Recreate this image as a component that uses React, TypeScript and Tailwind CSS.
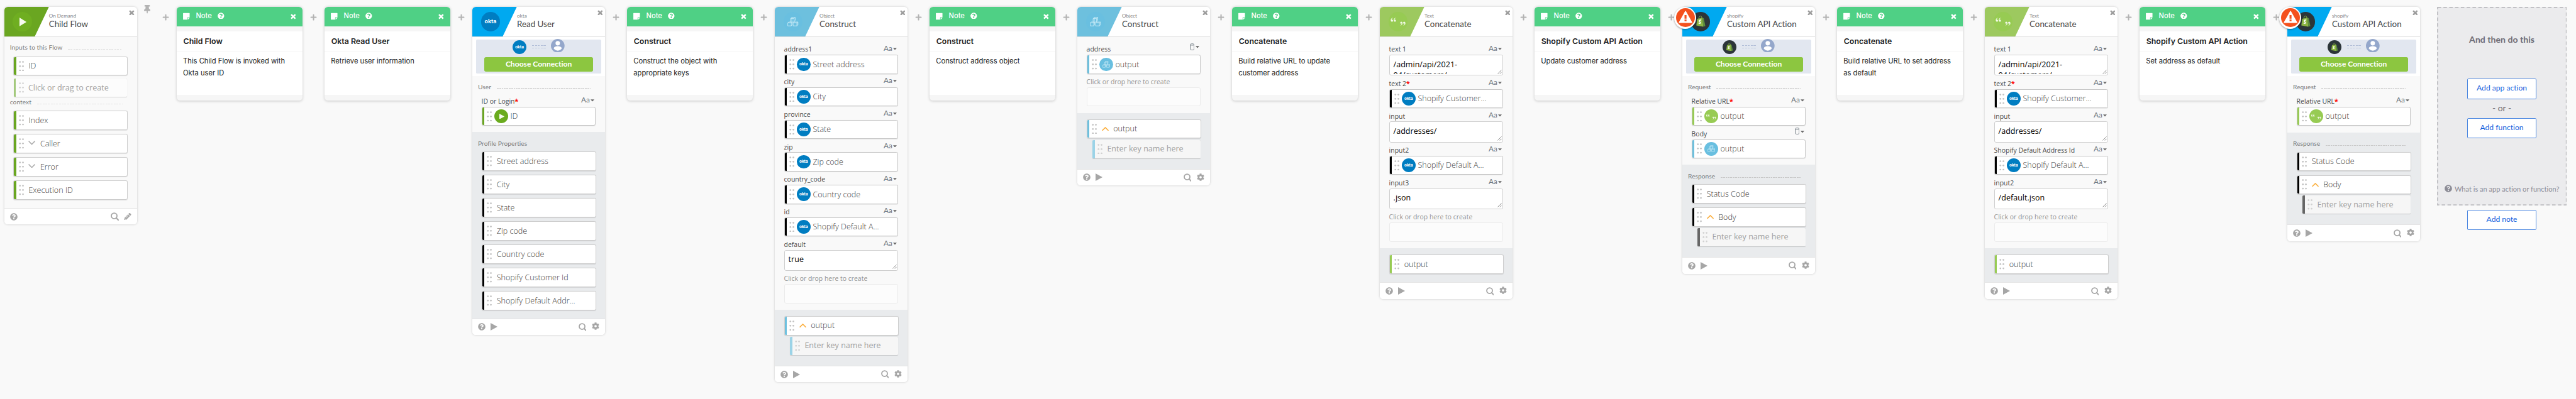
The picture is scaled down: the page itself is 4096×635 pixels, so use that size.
import type { ReactNode } from "react";
import { FaCog, FaPencilAlt, FaPlus, FaQuestionCircle, FaStickyNote, FaThumbtack } from "react-icons/fa";
import { RiDoubleQuotesL, RiDoubleQuotesR } from "react-icons/ri";

type Kind = "play" | "okta" | "object" | "text" | "shopify";

const HEADER_BG: Record<Kind, string> = {
  play: "text-[#6aa621]",
  okta: "text-[#00a9f0]",
  object: "text-[#6dc0de]",
  text: "text-[#9dc95f]",
  shopify: "text-[#00a9f0]",
};

const BAR: Record<Kind, string> = {
  play: "bg-[#6aa621]",
  okta: "bg-black",
  object: "bg-[#6dc0de]",
  text: "bg-[#97cb53]",
  shopify: "bg-black",
};

/* ---------- icons ---------- */

function Cubes({ className }: { className: string }) {
  return (
    <svg viewBox="0 0 20 17" className={className} fill="none" stroke="currentColor" strokeWidth="1" strokeLinejoin="round">
      <path d="M5.8 2.8 8 .7h6.2v5L12.4 8M5.8 2.8h6.4V9H5.8zM12.2 2.8l2-2.1M8 .7v7" />
      <path d="M.7 10.5 2.4 9h6v5.2L7 16M.7 10.5H7V16H.7zM7 10.5 8.6 9" />
      <path d="m10.4 10.5 1.7-1.5h7v5.3L17.2 16M10.4 10.5h6.8V16h-6.8zM17.2 10.5 19.1 9" />
    </svg>
  );
}

function ShopifyBag({ className }: { className: string }) {
  return (
    <svg viewBox="0 0 20 22" className={className}>
      <path d="M6 6C6.4 3 8 1 9.6 1c1.5 0 2.3 1.6 2.5 4.5" fill="none" stroke="#95bf47" strokeWidth="1.1" />
      <path d="M3.2 6.6 13.5 4l1.2 17.5L1.5 19.2z" fill="#8db543" />
      <path d="M13.5 4l2.3 1.5 3 14.9-4.1 1.1z" fill="#5e8e3e" />
      <path
        d="M10.9 9.2c-1.8-.9-4-.1-3.9 1.6.1 1.7 2.5 1.7 2.4 3.3-.1 1.3-1.9 1.5-3.500.4"
        fill="none"
        stroke="#fff"
        strokeWidth="1.9"
      />
    </svg>
  );
}

function SearchIcon({ className }: { className: string }) {
  return (
    <svg viewBox="0 0 14 14" className={className} fill="none" stroke="currentColor">
      <circle cx="6" cy="6" r="4.9" strokeWidth="1.9" />
      <path d="m9.5 9.5 3.6 3.8" strokeWidth="2.1" strokeLinecap="round" />
    </svg>
  );
}

function CloseIcon({ className }: { className: string }) {
  return (
    <svg viewBox="0 0 10 10" className={className} stroke="currentColor" strokeWidth="2.9">
      <path d="M1.200 1.200l7.600 7.600M8.800 1.200 1.200 8.800" />
    </svg>
  );
}

function Badge({ kind, large = false }: { kind: Kind; large?: boolean }) {
  const size = large ? "h-[33px] w-[33px]" : "h-[23.5px] w-[23.5px]";
  const base = `flex shrink-0 items-center justify-center rounded-full ${size}`;
  if (kind === "okta")
    return (
      <div className={`${base} bg-[#007dc1] font-['Inter',sans-serif] font-bold leading-none text-white ${large ? "text-[9.5px]" : "text-[7px]"}`}>
        <span className={large ? "pb-px" : ""}>okta</span>
      </div>
    );
  if (kind === "play")
    return (
      <div className={`${base} ${large ? "bg-[#6fae21]" : "bg-[#6aab1e]"}`}>
        <svg viewBox="0 0 12 14" className={large ? "ml-[3px] h-[15px] w-[12px]" : "ml-[2px] h-[9.5px] w-[9px]"} preserveAspectRatio="none">
          <path d="M0 0v14l12-7z" fill="#f7fbf0" />
        </svg>
      </div>
    );
  if (kind === "object")
    return (
      <div className={`${base} bg-[#69bfe0] text-[#c9ebf7]`}>
        <Cubes className={large ? "h-[16.5px] w-[19px]" : "h-[12px] w-[13.5px]"} />
      </div>
    );
  if (kind === "text")
    return (
      <div className={`${base} bg-[#97cb53] text-[#f2f9e6]`}>
        <RiDoubleQuotesL className={large ? "-mr-px mb-[6px] size-[12px]" : "mb-[4px] size-[8px]"} />
        <RiDoubleQuotesR className={large ? "ml-[5px] mt-[6px] size-[12px]" : "ml-[3px] mt-[5px] size-[8px]"} />
      </div>
    );
  return (
    <div className={`${base} bg-[#2c3539]`}>
      <ShopifyBag className={large ? "mb-px h-[21px] w-[18px]" : "h-[15px] w-[13px]"} />
    </div>
  );
}

/* ---------- rows ---------- */

function Dots() {
  return (
    <svg viewBox="0 0 9 18" className="h-[18px] w-[9px] shrink-0" fill="#c2c2c2">
      {[1.7, 9, 16.3].map((y) => (
        <g key={y}>
          <circle cx="1.9" cy={y} r="1.5" />
          <circle cx="7.1" cy={y} r="1.5" />
        </g>
      ))}
    </svg>
  );
}

function Chevron({ up = false }: { up?: boolean }) {
  return (
    <svg
      viewBox="0 0 12 7"
      className={`mr-[8px] h-[7px] w-[12px] shrink-0 ${up ? "text-[#fbb040]" : "mb-[3px] text-[#adadad]"}`}
      fill="none"
      stroke="currentColor"
      strokeWidth="1.7"
    >
      <path d={up ? "M.6 6.4 6 1l5.4 5.4" : "M.6.6 6 6 11.4.6"} />
    </svg>
  );
}

function Item({ kind, label, chevron }: { kind: Kind; label: string; chevron?: "up" | "down" }) {
  return (
    <div className="ml-[15.5px] flex h-[33px] w-[197px] items-center overflow-hidden rounded-[3px] border border-[#cdcdcd] bg-white shadow-[0_1px_1px_rgba(0,0,0,0.1)]">
      <div className={`h-full w-[4px] shrink-0 ${BAR[kind]}`} />
      <div className="ml-[4px]">
        <Dots />
      </div>
      <div className="w-[8px] shrink-0" />
      {chevron && <Chevron up={chevron === "up"} />}
      <span className="whitespace-nowrap pt-px text-[13.6px] font-light leading-[20px] text-[#3c3c3c]">{label}</span>
    </div>
  );
}

function Ghost({ bar, label, wide = false }: { bar: string; label: string; wide?: boolean }) {
  return (
    <div
      className={`flex h-[31.5px] items-center overflow-hidden rounded-[2px] shadow-[0_1px_1px_rgba(0,0,0,0.16)] ${
        wide ? "ml-[16px] mt-[5.5px] w-[195.5px] bg-[#fcfcfc]" : "ml-[26px] mt-[2.4px] w-[186px] bg-[#f6f6f6]"
      }`}
    >
      <div className={`h-full w-[4px] shrink-0 ${bar}`} />
      <div className="ml-[4.5px] opacity-70">
        <Dots />
      </div>
      <span className="ml-[7.5px] whitespace-nowrap text-[13.6px] leading-[20px] text-[#a0a0a0]">{label}</span>
    </div>
  );
}

function SectionLabel({ children, className, faint = false }: { children: string; className: string; faint?: boolean }) {
  return (
    <div className={`flex items-start pl-[9.5px] pr-[24.5px] ${className}`}>
      <span className="whitespace-nowrap font-['Lato',sans-serif] text-[11.1px] leading-[14px] text-[#7c7c7c]">{children}</span>
      <div
        className={`ml-[9.5px] mt-[9.2px] flex-1 ${
          faint
            ? "h-[1.5px] bg-[repeating-linear-gradient(90deg,#e0e0e0_0_3.2px,transparent_3.2px_4.7px)]"
            : "h-[1px] bg-[repeating-linear-gradient(90deg,#c8c8c8_0_3px,transparent_3px_4.1px)]"
        }`}
      />
    </div>
  );
}

type FieldProps = { label: string; required?: boolean; type?: "text" | "object"; muted?: boolean; children: ReactNode };

function Field({ label, required = false, type = "text", muted = false, children }: FieldProps) {
  return (
    <div className="ml-[15.5px] w-[196px]">
      <div className="flex h-[23px] items-start justify-between pt-[6px] leading-[16px]">
        <span className={`whitespace-nowrap text-[11.3px] ${muted ? "text-[#939393]" : "text-[#484848]"}`}>
          {label}
          {required && <span className="text-[11.3px] font-bold leading-none text-[#f00]">*</span>}
        </span>
        {!muted && (
          <span className="mr-[2px] flex items-center gap-px text-[#6d7780]">
            {type === "text" ? (
              <span className="-mt-[2px] font-['Lato',sans-serif] text-[12.8px] leading-[16px]">Aa</span>
            ) : (
              <svg viewBox="0 0 8 12" className="-mt-[3px] mr-[1px] h-[12px] w-[8px]" fill="none" stroke="currentColor">
                <path d="M.6 2.5v7.2c0 1 1.5 1.7 3.4 1.7s3.400-.7 3.400-1.7V2.5M.6 2.5c0-1 1.5-1.8 3.4-1.8s3.400.8 3.400 1.8c0 .5-1.5.7-3.400.7S.6 3 .6 2.5z" />
              </svg>
            )}
            <svg viewBox="0 0 7 4" className="-mt-px h-[4px] w-[6.5px]">
              <path d="M0 0h7L3.5 4z" fill="#666" />
            </svg>
          </span>
        )}
      </div>
      {children}
    </div>
  );
}

function Pill({ kind, label }: { kind: Kind; label: string }) {
  return (
    <div className="flex h-[33px] items-center overflow-hidden rounded-[3px] border border-[#c6c6c6] bg-white shadow-[0_1px_1px_rgba(0,0,0,0.08)]">
      <div className={`h-full w-[4px] shrink-0 ${BAR[kind]}`} />
      <div className="ml-[4.5px] mr-[3.5px]">
        <Dots />
      </div>
      <Badge kind={kind} />
      <span className="ml-[4px] whitespace-nowrap pt-px text-[13.6px] font-light leading-[20px] text-[#3c3c3c]">{label}</span>
    </div>
  );
}

function TextBox({ children }: { children: string }) {
  return (
    <div className="relative h-[36px] rounded-[3px] border border-[#cfcfcf] bg-white">
      <div className="h-[32px] overflow-hidden pl-[6.5px] pt-[6.3px] text-[13.6px] leading-[18.6px] text-black">{children}</div>
      <svg viewBox="0 0 8 8" className="absolute bottom-[2px] right-[1px] h-[7.5px] w-[7.5px]" stroke="#666" strokeWidth=".9">
        <path d="M.5 7.5l7-7M4.5 7.5l3-3" />
      </svg>
    </div>
  );
}

function DropZone() {
  return (
    <Field label="Click or drop here to create" muted>
      <div className="h-[33px] rounded-[3px] border border-[#ebebeb] bg-[#fcfcfc]" />
    </Field>
  );
}

/* ---------- cards ---------- */

type CardProps = { kind: Kind; app: string; title: string; error?: boolean; editable?: boolean; children: ReactNode };

function Card({ kind, app, title, error = false, editable = false, children }: CardProps) {
  return (
    <section className="relative w-[228px] shrink-0 rounded-[6px] bg-[#f9f9f9] shadow-[0_0_4px_rgba(0,0,0,0.2)]">
      <header className="flex h-[52px] rounded-t-[6px] border-b border-[#dfdfdf] bg-white">
        <div className="relative h-[51.5px] w-[76.5px] shrink-0 overflow-hidden rounded-tl-[6px]">
          <svg viewBox="0 0 76.5 52" className={`absolute inset-0 h-full w-full ${HEADER_BG[kind]}`} preserveAspectRatio="none">
            <path d="M0 0h76.5L52 52H0z" fill="currentColor" />
          </svg>
          <div className="relative ml-[14.5px] mt-[9.5px]">
            <Badge kind={kind} large />
          </div>
        </div>
        <div className="flex-1 whitespace-nowrap pt-[10.5px] font-['Lato',sans-serif]">
          <div className="text-[8.8px] leading-[12px] text-[#858585]">{app}</div>
          <div className="text-[14.5px] leading-[17px] text-[#484848]">{title}</div>
        </div>
        <CloseIcon className="mr-[4px] mt-[5.5px] size-[9.5px] text-[#9d9d9d]" />
      </header>
      {error && (
        <div className="absolute -left-[14px] top-0 flex size-[38px] items-center justify-center rounded-full bg-white shadow-[0_1px_3px_rgba(0,0,0,0.4)]">
          <div className="flex size-[33px] items-center justify-center rounded-full bg-[#f4511e]">
            <svg viewBox="0 0 24 22" className="mb-[2px] h-[22px] w-[24px]">
              <path d="M12 1.2 22.8 20.4H1.2z" fill="#fff" stroke="#fff" strokeWidth="1.6" strokeLinejoin="round" />
              <path d="M10.3 7.5h3.4v6.2h-3.4zM10.3 15.2h3.4V18h-3.4z" fill="#f4511e" />
            </svg>
          </div>
        </div>
      )}
      {children}
      <footer className="flex h-[28.7px] items-center rounded-b-[6px] border-t border-[#e4e4e4] bg-white px-[9.5px] text-[#a6a6a6]">
        <FaQuestionCircle className="size-[13px]" />
        {!editable && (
          <svg viewBox="0 0 12 14" className="ml-[9px] h-[13px] w-[12px]" preserveAspectRatio="none">
            <path d="M0 0v14l12-7z" fill="currentColor" />
          </svg>
        )}
        <SearchIcon className="ml-auto mr-[9.5px] size-[14px]" />
        {editable ? <FaPencilAlt className="size-[12.5px]" /> : <FaCog className="mb-[2px] size-[13px]" />}
      </footer>
    </section>
  );
}

function Connection({ kind }: { kind: Kind }) {
  return (
    <div className="h-[67px] bg-white px-[6.7px] pt-[4.2px]">
      <div className="h-[58.5px] rounded-[2px] bg-[#e2e7f0] px-[14px]">
        <div className="flex h-[31px] items-start pl-[48.5px]">
          <div className="pt-[1.5px]">
            <Badge kind={kind} />
          </div>
          <div className="ml-[9.5px] mt-[10px] w-[24px]">
            <div className="h-[1.2px] bg-[repeating-linear-gradient(90deg,#aebbd6_0_3.5px,transparent_3.5px_5px)]" />
            <div className="mt-[3.5px] h-[1.2px] bg-[repeating-linear-gradient(90deg,#c3cde0_0_3.5px,transparent_3.5px_5px)]" />
          </div>
          <svg viewBox="0 0 24 24" className="-mt-[1px] ml-[9px] size-[23.5px]">
            <circle cx="12" cy="12" r="12" fill="#94a7cb" />
            <circle cx="12" cy="7.6" r="3.9" fill="#fff" />
            <path d="M5 17c0-2.9 3.5-4.2 7-4.2s7 1.3 7 4.2c-1.5 2.1-4 3.6-7 3.6S6.5 19.1 5 17z" fill="#fff" />
          </svg>
        </div>
        <div className="flex h-[25.2px] items-center justify-center rounded-[3px] bg-[#8cc640] pb-[2.5px] font-['Lato',sans-serif] text-[13.1px] font-bold text-white">
          Choose Connection
        </div>
      </div>
    </div>
  );
}

function Output({ children, className }: { children: ReactNode; className: string }) {
  return <div className={`bg-[#e9ebed] ${className}`}>{children}</div>;
}

function Note({ title, children }: { title: string; children: string }) {
  return (
    <section className="mt-[.5px] flex h-[161px] w-[216.5px] shrink-0 flex-col overflow-hidden rounded-[6px] bg-[#f6f6f6] font-['Inter',sans-serif] shadow-[0_1px_5px_rgba(0,0,0,0.2)]">
      <header className="flex h-[33px] items-center bg-[#4fd085] pl-[11px] pr-[11.5px] text-white">
        <FaStickyNote className="h-[13px] w-[11.5px]" />
        <span className="ml-[10.5px] pb-[3px] text-[12px] font-medium leading-[16px]">Note</span>
        <FaQuestionCircle className="mb-[3px] ml-[10px] size-[11.5px]" />
        <CloseIcon className="ml-auto mt-[1px] size-[9.500px]" />
      </header>
      <h3 className="mt-[9px] h-[35px] border-b border-[#f5f5f5] bg-white pl-[11.5px] pt-[8px] text-[13.4px] font-semibold leading-[19px] text-[#1d1d21]">
        {title}
      </h3>
      <p className="h-[74.5px] bg-white pl-[11px] pr-[12px] pt-[6px] text-[12.1px] leading-[21px] text-[#1d1d21]">{children}</p>
    </section>
  );
}

function Plus() {
  return (
    <div className="flex w-[38px] shrink-0 justify-center pt-[12px] text-[#b3b3b3]">
      <FaPlus className="size-[12px]" />
    </div>
  );
}

function ConcatCard({ fields }: { fields: [string, string][] }) {
  return (
    <Card kind="text" app="Text" title="Concatenate">
      <div className="pb-[11.5px] pt-[7.8px]">
        <Field label="text 1">
          <TextBox>/admin/api/2021-04/customers/</TextBox>
        </Field>
        <Field label="text 2" required>
          <Pill kind="okta" label="Shopify Customer..." />
        </Field>
        <Field label="input">
          <TextBox>/addresses/</TextBox>
        </Field>
        {fields.map(([label, value], i) => (
          <Field key={label} label={label}>
            {i === 0 ? <Pill kind="okta" label={value} /> : <TextBox>{value}</TextBox>}
          </Field>
        ))}
        <DropZone />
      </div>
      <Output className="pb-[15px] pt-[10.7px]">
        <Item kind="text" label="output" />
      </Output>
    </Card>
  );
}

function ShopifyCard({ body }: { body: boolean }) {
  return (
    <Card kind="shopify" app="shopify" title="Custom API Action" error>
      <Connection kind="shopify" />
      <div className="pb-[11.2px]">
        <SectionLabel className="h-[30.3px] pt-[12px]">Request</SectionLabel>
        <Field label="Relative URL" required>
          <Pill kind="text" label="output" />
        </Field>
        {body && (
          <Field label="Body" type="object">
            <Pill kind="object" label="output" />
          </Field>
        )}
      </div>
      <Output className="pb-[18.5px]">
        <SectionLabel className="h-[33.5px] pt-[12.5px]">Response</SectionLabel>
        <div className="flex flex-col gap-[7px]">
          <Item kind="shopify" label="Status Code" />
          <Item kind="shopify" label="Body" chevron="up" />
        </div>
        <Ghost bar="bg-[#666]" label="Enter key name here" />
      </Output>
    </Card>
  );
}

function ActionButton({ children }: { children: string }) {
  return (
    <button className="flex h-[35.5px] w-[119px] items-center justify-center rounded-[2px] border border-[#4a86e0] bg-white pb-[2px] font-['Lato',sans-serif] text-[13.1px] text-[#1662dd]">
      {children}
    </button>
  );
}

const PROFILE = ["Street address", "City", "State", "Zip code", "Country code", "Shopify Customer Id", "Shopify Default Addr..."];

const ADDRESS: [string, string][] = [
  ["address1", "Street address"],
  ["city", "City"],
  ["province", "State"],
  ["zip", "Zip code"],
  ["country_code", "Country code"],
  ["id", "Shopify Default A..."],
];

export default function App() {
  return (
    <main className="h-[687.1px] w-[4432px] overflow-hidden bg-[#f9f9f9] font-['Open_Sans',sans-serif] [font-variant-ligatures:none] [zoom:0.9242]">
      <div className="flex items-start pl-[7.6px] pt-[11.5px]">
        <Card kind="play" app="On Demand" title="Child Flow" editable>
          <div className="pb-[14px]">
            <SectionLabel className="h-[33.5px] pt-[11.5px]" faint>
              Inputs to this Flow
            </SectionLabel>
            <Item kind="play" label="ID" />
            <Ghost bar="bg-[#a3c97c]" label="Click or drag to create" wide />
            <SectionLabel className="h-[24px] pt-[2px]" faint>
              context
            </SectionLabel>
            <div className="flex flex-col gap-[7px]">
              <Item kind="play" label="Index" />
              <Item kind="play" label="Caller" chevron="down" />
              <Item kind="play" label="Error" chevron="down" />
              <Item kind="play" label="Execution ID" />
            </div>
          </div>
        </Card>
        <div className="flex w-[68.4px] shrink-0">
          <div className="-mt-[4px] flex w-[30.4px] justify-end pr-[7px] text-[#b3b3b3]">
            <FaThumbtack className="h-[17px] w-[11px]" />
          </div>
          <Plus />
        </div>
        <Note title="Child Flow">This Child Flow is invoked with Okta user ID</Note>
        <Plus />
        <Note title="Okta Read User">Retrieve user information</Note>
        <Plus />
        <Card kind="okta" app="okta" title="Read User">
          <Connection kind="okta" />
          <div className="pb-[11px]">
            <SectionLabel className="h-[30.3px] pt-[12px]">User</SectionLabel>
            <Field label="ID or Login" required>
              <Pill kind="play" label="ID" />
            </Field>
          </div>
          <Output className="pb-[14px]">
            <SectionLabel className="h-[33.5px] pt-[12.5px]">Profile Properties</SectionLabel>
            <div className="flex flex-col gap-[7px]">
              {PROFILE.map((p) => (
                <Item key={p} kind="okta" label={p} />
              ))}
            </div>
          </Output>
        </Card>
        <Plus />
        <Note title="Construct">Construct the object with appropriate keys</Note>
        <Plus />
        <Card kind="object" app="Object" title="Construct">
          <div className="pb-[11.5px] pt-[7.8px]">
            {ADDRESS.map(([label, value]) => (
              <Field key={label} label={label}>
                <Pill kind="okta" label={value} />
              </Field>
            ))}
            <Field label="default">
              <TextBox>true</TextBox>
            </Field>
            <DropZone />
          </div>
          <Output className="pb-[18.5px] pt-[10.7px]">
            <Item kind="object" label="output" chevron="up" />
            <Ghost bar="bg-[#9bd3e7]" label="Enter key name here" />
          </Output>
        </Card>
        <Plus />
        <Note title="Construct">Construct address object</Note>
        <Plus />
        <Card kind="object" app="Object" title="Construct">
          <div className="pb-[11.5px] pt-[7.8px]">
            <Field label="address" type="object">
              <Pill kind="object" label="output" />
            </Field>
            <DropZone />
          </div>
          <Output className="pb-[18.5px] pt-[10.7px]">
            <Item kind="object" label="output" chevron="up" />
            <Ghost bar="bg-[#9bd3e7]" label="Enter key name here" />
          </Output>
        </Card>
        <Plus />
        <Note title="Concatenate">Build relative URL to update customer address</Note>
        <Plus />
        <ConcatCard
          fields={[
            ["input2", "Shopify Default A..."],
            ["input3", ".json"],
          ]}
        />
        <Plus />
        <Note title="Shopify Custom API Action">Update customer address</Note>
        <Plus />
        <ShopifyCard body />
        <Plus />
        <Note title="Concatenate">Build relative URL to set address as default</Note>
        <Plus />
        <ConcatCard
          fields={[
            ["Shopify Default Address Id", "Shopify Default A..."],
            ["input2", "/default.json"],
          ]}
        />
        <Plus />
        <Note title="Shopify Custom API Action">Set address as default</Note>
        <Plus />
        <ShopifyCard body={false} />
        <aside className="ml-[29px] flex w-[223.5px] shrink-0 flex-col items-center gap-[7.5px] font-['Lato',sans-serif]">
          <div className="relative flex h-[342px] w-full flex-col items-center bg-[#ebebed] pt-[47px]">
            <svg className="absolute inset-0 h-full w-full" fill="none">
              <rect x="1" y="1" width="221.5" height="340" stroke="#bcbcc0" strokeWidth="1.8" strokeDasharray="6 4" />
            </svg>
            <h2 className="text-[15.3px] font-bold leading-[20px] text-[#6e6e78]">And then do this</h2>
            <div className="mt-[56.5px]">
              <ActionButton>Add app action</ActionButton>
            </div>
            <div className="flex h-[32.5px] items-center text-[15px] text-[#6e6e78]">- or -</div>
            <ActionButton>Add function</ActionButton>
            <div className="mt-[78.5px] flex items-center gap-[4.5px] text-[#8c8c96]">
              <FaQuestionCircle className="mb-[3px] size-[13px]" />
              <span className="whitespace-nowrap text-[12px] leading-[18px]">What is an app action or function?</span>
            </div>
          </div>
          <ActionButton>Add note</ActionButton>
        </aside>
      </div>
    </main>
  );
}
